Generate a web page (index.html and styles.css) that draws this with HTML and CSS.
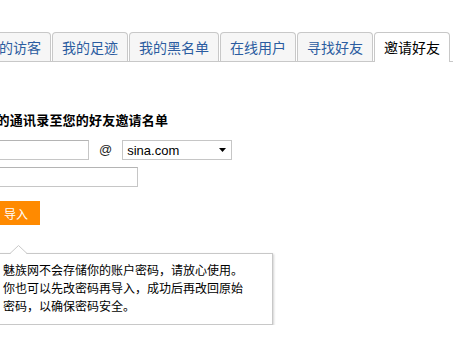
FILE: index.html
```html
<!DOCTYPE html>
<html lang="zh-CN">
<head>
<meta charset="utf-8">
<title>邀请好友</title>
<link rel="stylesheet" href="styles.css">
</head>
<body>
<div class="page">
  <ul class="tabs">
    <li class="tab">我的访客</li>
    <li class="tab">我的足迹</li>
    <li class="tab">我的黑名单</li>
    <li class="tab">在线用户</li>
    <li class="tab">寻找好友</li>
    <li class="tab active">邀请好友</li>
  </ul>
  <h2 class="title">导入您的通讯录至您的好友邀请名单</h2>
  <div class="form">
    <div class="row">
      <input class="field field-user" type="text">
      <span class="at">@</span>
      <div class="select">
        <span class="select-text">sina.com</span>
        <svg class="select-arrow" width="7" height="4" viewBox="0 0 7 4"><polygon points="0,0 7,0 3.5,4" fill="#000"/></svg>
      </div>
    </div>
    <div class="row row-pass">
      <input class="field field-pass" type="password">
    </div>
    <button class="btn" type="button">导入</button>
    <div class="tip">
      <svg class="tip-arrow" width="17" height="9" viewBox="0 0 17 9"><polygon points="0,9 8.5,0.5 17,9" fill="#fff"/><polyline points="0,8.5 8.5,0.5 17,8.5" fill="none" stroke="#c8c8c8" stroke-width="1"/></svg>
      <p class="tip-text">魅族网不会存储你的账户密码，请放心使用。你也可以先改密码再导入，成功后再改回原始密码，以确保密码安全。</p>
    </div>
  </div>
</div>
</body>
</html>
```

FILE: styles.css
```css
html, body {
  margin: 0;
  padding: 0;
  overflow: hidden;
  background: #fff;
}
body {
  font-family: "Liberation Sans", "Noto Sans CJK SC", sans-serif;
  color: #000;
}
.page {
  margin-left: -40px;
  width: 500px;
}
.tabs {
  list-style: none;
  margin: 0;
  padding: 32px 0 0 15px;
  display: flex;
  align-items: flex-end;
  gap: 1px;
  border-bottom: 1px solid #c8c8c8;
}
.tab {
  height: 28px;
  line-height: 28px;
  padding: 0 9px;
  border: 1px solid #c8c8c8;
  border-bottom: none;
  border-radius: 4px 4px 0 0;
  background: #f6f6f6;
  color: #2b5ca0;
  font-family: "Noto Sans CJK SC", sans-serif;
  font-size: 14px;
  white-space: nowrap;
}
.tab.active {
  background: #fff;
  color: #000;
  height: 29px;
  margin-bottom: -1px;
}
.title {
  margin: 49px 0 0 -3px;
  font-size: 13px;
  line-height: 18px;
  letter-spacing: 0.2px;
  font-weight: bold;
  font-family: "Noto Sans CJK SC", sans-serif;
  color: #000;
}
.form {
  padding-left: 32px;
}
.row {
  margin-top: 11px;
  display: flex;
  align-items: center;
  gap: 10px;
  height: 20px;
}
.row-pass {
  margin-top: 7px;
}
.field {
  box-sizing: border-box;
  height: 20px;
  margin: 0;
  padding: 0 3px;
  border: 1px solid #c6c6c6;
  border-top-color: #b4b4b4;
  background: #fff;
  outline: none;
}
.field-user {
  width: 97px;
}
.field-pass {
  width: 146px;
}
.at {
  font-size: 13px;
  color: #222;
  line-height: 20px;
}
.select {
  box-sizing: border-box;
  width: 110px;
  height: 20px;
  border: 1px solid #c6c6c6;
  display: flex;
  align-items: center;
  justify-content: space-between;
  padding: 0 4px 0 4px;
  background: #fff;
}
.select-text {
  font-size: 13px;
  color: #000;
}
.select-arrow {
  display: block;
  margin-right: 1px;
}
.btn {
  display: block;
  margin-top: 14px;
  height: 24px;
  width: 48px;
  padding: 0;
  border: none;
  background: #ff8a00;
  color: #fff;
  font-family: "Noto Sans CJK SC", sans-serif;
  font-size: 12px;
}
.tip {
  position: relative;
  margin-top: 28px;
  width: 281px;
  box-sizing: border-box;
  border: 1px solid #c8c8c8;
  box-shadow: 1px 1px 2px rgba(0, 0, 0, 0.18);
  background: #fff;
  padding: 7px 19px 9px 10px;
}
.tip-arrow {
  position: absolute;
  left: 17px;
  top: -9px;
  display: block;
}
.tip-text {
  margin: 0;
  font-size: 12px;
  line-height: 18px;
  color: #000;
  font-family: "Noto Sans CJK SC", sans-serif;
}
```
